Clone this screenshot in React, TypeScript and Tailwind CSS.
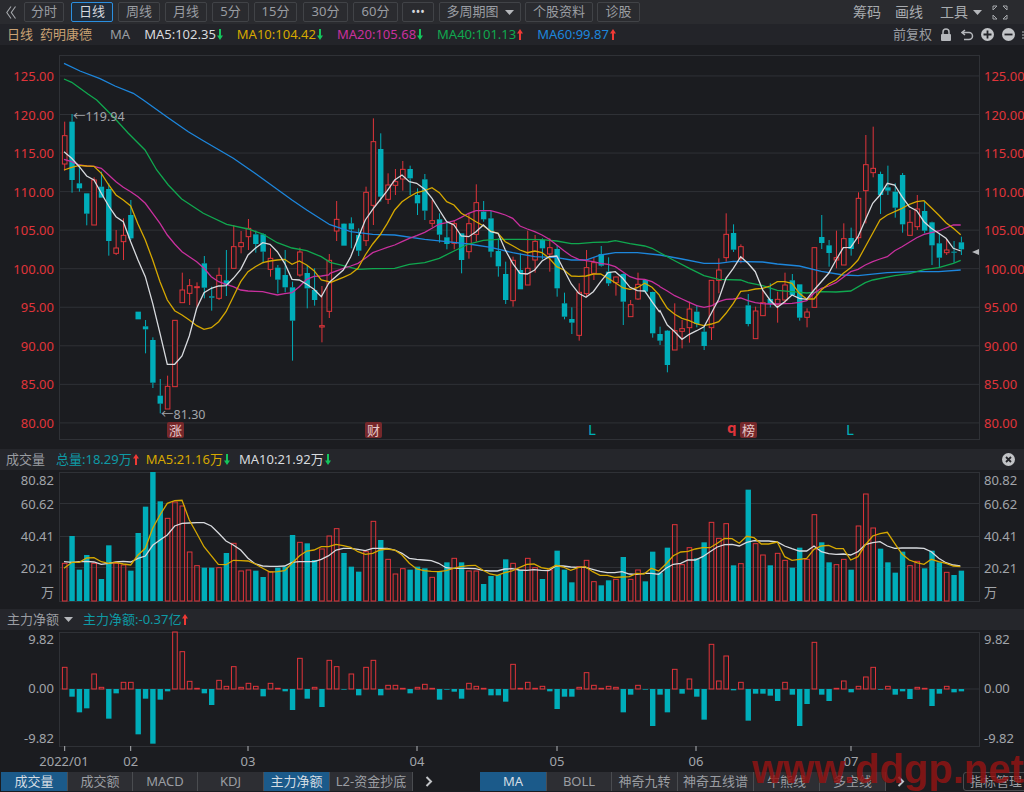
import React from 'react'

const RED = '#e0343a'
const CYAN = '#00adb9'
const WHITE = '#d8dade'
const YELLOW = '#d6a800'
const MAGENTA = '#c9309e'
const GREEN = '#10a84f'
const BLUE = '#1d86dc'
const GRID = '#2f3136'
const AXIS = '#a2a5aa'

const X = (i: number) => 64.7 + 7.35 * i

// high, body top, body bottom, low (zoomed y: screen y = 100 + v / 3), 1 = up candle
const candles: number[][] = [
  [65,107,192,212,1],[42,65,240,278,0],[195,250,265,275,0],[280,280,341,376,0],[232,240,375,375,1],[215,260,293,293,0],[250,267,423,467,0],[390,444,460,465,1],[355,406,425,480,1],[300,345,415,420,0],
  [635,635,658,658,0],[660,679,688,760,0],[712,720,848,864,0],[837,887,911,940,0],[827,859,927,927,1],[660,661,860,860,1],[518,570,608,608,1],[537,557,580,615,1],[547,560,562,620,1],[468,490,563,595,0],
  [560,589,593,632,0],[503,526,595,600,1],[450,541,555,588,0],[375,440,505,505,1],[393,428,440,460,1],[357,385,410,450,1],[392,403,432,458,0],[400,403,455,490,0],[445,475,508,530,1],[495,503,539,580,0],
  [450,525,562,577,0],[545,562,662,782,0],[443,456,525,530,1],[495,519,565,625,0],[505,570,600,617,0],[558,677,681,727,1],[462,481,634,654,1],[303,358,393,423,1],[370,371,437,437,0],[352,370,388,445,0],
  [385,405,452,468,0],[260,277,422,438,1],[55,125,316,375,1],[100,147,290,305,0],[220,255,298,312,1],[207,245,256,285,1],[183,208,237,272,1],[197,207,235,285,0],[265,285,310,345,0],[222,238,332,360,0],
  [300,362,370,382,1],[340,358,404,428,0],[365,412,432,448,0],[360,371,430,448,1],[400,400,480,520,0],[340,371,455,476,1],[253,308,403,425,1],[303,335,358,365,0],[333,355,455,472,0],[415,453,499,530,0],
  [485,522,600,612,0],[470,481,602,620,1],[460,510,568,568,0],[392,505,555,555,1],[405,424,480,518,1],[415,420,445,478,0],[415,443,462,515,1],[435,447,565,590,0],[578,610,650,658,0],[622,657,668,702,0],
  [550,577,706,722,1],[450,503,581,590,1],[472,488,520,540,1],[438,462,497,500,0],[472,515,550,558,0],[530,531,548,587,1],[520,522,605,675,0],[600,614,650,650,1],[518,553,597,600,1],[537,540,575,580,0],
  [575,576,700,713,0],[680,702,722,735,0],[690,692,795,817,0],[610,692,750,750,1],[660,686,694,745,1],[605,627,683,728,1],[615,635,672,682,0],[680,695,738,750,0],[540,541,683,720,1],[475,510,541,580,1],
  [340,403,473,485,1],[373,399,449,456,0],[433,440,475,490,1],[582,616,672,679,0],[620,633,716,716,1],[570,608,647,647,1],[550,597,612,622,0],[575,598,613,668,1],[518,555,600,610,1],[522,541,585,585,0],
  [553,553,653,662,0],[625,636,652,682,1],[442,443,622,622,1],[345,411,429,447,0],[420,436,459,500,0],[392,473,480,505,1],[370,416,495,495,1],[383,414,447,467,0],[277,295,413,432,1],[105,194,272,370,1],
  [80,205,218,232,1],[215,222,285,342,0],[197,262,272,285,0],[250,275,323,353,0],[219,225,373,398,0],[330,367,406,406,1],[285,327,380,390,1],[305,333,392,400,0],[365,367,436,495,0],[400,430,473,503,0],
  [417,450,458,465,1],[423,455,458,488,0],[410,427,448,465,0],
]

// bar tops (zoomed, screen y = 440 + v / 3), negative = red bar
const volume = [
  -370,288,389,345,-370,417,316,-370,-375,392,279,200,96,184,-235,-186,-198,-336,-377,383,383,-383,339,-310,-393,-390,392,411,-395,383,
  380,285,-307,310,360,-327,-288,-266,339,380,395,-335,-244,300,-358,-402,-386,389,380,385,-412,393,367,-355,367,-393,-393,432,408,405,
  358,-370,390,-355,-383,417,-390,332,389,427,-380,-361,-425,436,421,-418,351,-418,-390,424,335,398,323,-254,-374,-323,355,307,-247,-295,
  -251,376,-371,149,-311,-345,376,-340,-361,383,323,-358,-224,307,367,-374,-358,389,-258,-162,-264,326,367,398,335,-377,-364,385,332,367,
  -397,405,392,
]

// zoomed y of the bar's far end (screen y = 610 + v / 3); the zero line is 237
const netflow = [
  172,260,307,295,192,232,326,250,217,217,373,266,401,269,244,66,125,214,235,250,285,211,229,170,232,220,229,259,220,235,
  244,300,145,266,232,291,151,170,239,192,256,172,151,256,226,226,235,250,232,223,235,269,239,245,266,220,229,235,256,256,
  275,163,235,217,235,229,244,297,260,260,232,188,226,235,229,232,307,254,226,239,348,254,307,178,251,207,260,329,103,213,
  138,241,217,332,251,251,257,273,217,254,348,282,97,254,273,235,213,247,229,201,172,239,229,254,244,267,232,235,288,251,
  229,247,244,
]

const zoomed = (offX: number, offY: number, flat: number[]) => {
  const out: number[][] = []
  for (let i = 0; i < flat.length; i += 2) out.push([offX + flat[i] / 3, offY + flat[i + 1] / 3])
  return out
}

// the pieces come from overlapping crops, so points going backwards are dropped
const line = (...parts: number[][][]) => {
  let last = -1
  const pts: string[] = []
  parts.flat().forEach(([x, y]) => {
    if (x > last) {
      pts.push(`${x.toFixed(1)},${y.toFixed(1)}`)
      last = x
    }
  })
  return pts.join(' ')
}

const ma5 = line(
  zoomed(0, 100, [192,155,215,175,238,200,260,228,282,240,304,280,326,318,348,350,370,365,392,425,414,480,436,530,458,610,480,700,502,793,524,793,546,768,568,708,590,625,612,578,634,565,656,558,678,557,700,535,722,508,744,465,766,445,788,428,810,433,832,455,854,490,876,538,898,540,920,553,942,568,964,590,986,550]),
  zoomed(330, 100, [0,545,40,510,62,470,84,415,106,360,128,328,150,300,172,272,194,240,216,225,238,245,260,250,284,268,306,295,328,330,350,365,372,375,394,408,416,410,438,395,460,375,482,395,504,400,526,450,548,490,570,520,592,522,614,510,636,483,658,470,680,468,702,510,724,552,746,580,768,592,790,575,812,545,834,518,856,515,878,535,900,562,922,572,944,573,966,605,988,635]),
  zoomed(660, 100, [0,632,22,675,44,695,66,718,88,703,110,692,132,680,154,640,176,598,198,535,220,505,242,470,264,490,286,515,308,570,330,600,352,622,374,605,396,585,418,595,440,598,462,570,484,545,506,520,528,480,550,443,572,442,594,410,616,360,638,310,660,285,682,250,704,255,726,290,748,320,770,332,792,365,814,385,836,400,858,415,880,445,902,453]),
)
const ma10 = line(
  zoomed(0, 100, [192,210,215,202,238,196,260,198,282,199,304,220,326,255,348,285,370,300,392,318,414,372,436,420,458,480,480,545,502,600,524,632,546,645,568,660,590,677,612,688,634,683,656,665,678,635,700,590,722,545,744,515,766,500,788,488,810,483,832,480,854,478,876,493,898,483,920,495,942,512,964,540,986,545]),
  zoomed(330, 100, [0,548,40,532,62,522,84,505,106,465,128,432,150,405,172,370,194,330,216,305,238,290,260,278,284,272,306,263,328,278,350,305,372,315,394,340,416,352,438,365,460,377,482,393,504,400,526,425,548,437,570,450,592,458,614,453,636,458,658,475,680,500,702,510,724,528,746,529,768,528,790,522,812,522,834,535,856,548,878,563,900,568,922,563,944,550,966,562,988,585]),
  zoomed(660, 100, [0,590,22,625,44,643,66,655,88,662,110,672,132,677,154,672,176,665,198,640,220,610,242,574,264,572,286,567,308,565,330,558,352,545,374,545,396,550,418,580,440,597,462,597,484,570,506,552,528,540,550,520,572,503,594,480,616,440,638,400,660,360,682,345,704,335,726,325,748,313,770,305,792,302,814,323,836,345,858,368,880,385,902,404]),
)
const ma20 = line(
  zoomed(0, 100, [192,178,215,185,238,195,260,198,282,199,304,205,326,225,348,245,370,262,392,275,414,290,436,310,458,340,480,370,502,405,524,432,546,455,568,470,590,485,612,505,634,530,656,545,678,553,700,560,722,570,744,573,766,574,788,575,810,580,832,585,854,581,876,578,898,560,920,538,942,529,964,528,986,525]),
  zoomed(330, 100, [0,520,40,505,62,498,84,490,106,475,128,458,150,450,172,442,194,435,216,425,238,415,260,407,284,397,306,385,328,372,350,368,372,363,394,352,416,340,438,332,460,332,482,332,504,338,526,345,548,355,570,378,592,387,614,395,636,405,658,418,680,435,702,452,724,468,746,478,768,482,790,485,812,490,834,493,856,500,878,515,900,530,922,537,944,538,966,545,988,558]),
  zoomed(660, 100, [0,560,22,573,44,587,66,597,88,607,110,617,132,622,154,618,176,605,198,598,220,597,242,594,264,602,286,608,308,611,330,612,352,612,374,611,396,610,418,607,440,602,462,580,484,565,506,558,528,548,550,532,572,515,594,508,616,495,638,485,660,477,682,470,704,452,726,440,748,427,770,413,792,403,814,398,836,393,858,384,880,375,902,375]),
)
const ma40 = line(
  zoomed(0, 0, [192,237,215,247,240,265,265,283,290,300]),
  zoomed(0, 100, [340,50,385,100,435,150,470,210,505,255,545,297,610,340,680,373,744,387,788,402,832,428,876,444,920,452,964,470]),
  zoomed(330, 100, [0,487,40,497,84,508,128,506,194,505,238,493,284,488,328,475,372,453,416,432,460,421,504,418,570,418,636,419,680,423,724,431,746,431,790,427,834,426,856,422,900,431,944,438,966,445]),
  zoomed(660, 100, [0,458,44,482,88,505,132,527,176,538,242,540,264,548,308,557,352,571,396,575,440,579,484,575,528,576,572,573,616,548,638,540,704,527,748,521,792,509,836,503,880,490,902,481]),
)
const ma60 = line(
  zoomed(0, 0, [192,190,240,213,300,236,345,258,400,280]),
  zoomed(0, 100, [430,0,500,50,565,95,610,122,700,175,765,220,876,300,920,330,986,372]),
  zoomed(330, 100, [0,374,62,395,128,403,194,405,284,418,350,425,416,432,482,442,548,458,614,470,680,473,724,480,768,480,812,465,856,458,922,458]),
  zoomed(660, 100, [0,465,66,477,132,490,176,490,220,484,308,486,352,492,418,498,484,514,550,525,594,527,682,518,770,515,836,515,902,510]),
)
const volMa5 = line(
  zoomed(0, 440, [192,385,216,367,238,367,260,354,282,353,304,365,326,370,348,367,370,372,392,375,414,345,436,325,458,265,480,225,502,190,524,182,546,181,568,240,590,280,612,320,655,373,678,374,700,361,722,362,744,363,766,372,788,385,810,396,832,395,854,392,876,370,898,348,920,333,942,330,964,320,986,320,1008,313,1030,317,1052,322,1074,335,1096,343,1118,340,1140,330,1162,327,1184,330,1206,345,1228,370,1250,387,1272,392,1294,394,1316,395,1338,392,1360,385,1382,380,1404,377,1426,376,1448,390,1470,402,1492,406,1514,398]),
  zoomed(512, 440, [0,393,22,383,44,373,66,372,88,383,110,387,132,376,154,381,176,391,198,383,220,380,242,395,264,406,286,406,308,412,330,411,352,410,374,400,396,402,418,385,440,393,462,372,484,347,506,336,528,334,550,327,572,323,594,323,616,310,638,295,660,296,682,310,704,289,726,293,748,312,770,312,796,306,818,350,840,361,862,358,884,355,906,328,928,318,950,316,972,326,994,326,1016,360,1038,350,1060,315,1082,288,1104,281,1126,277,1148,310,1170,342,1192,360,1214,368,1236,373,1258,358,1280,365,1302,370,1324,378,1345,380]),
)
const volMa10 = line(
  zoomed(0, 440, [192,365,216,367,238,365,260,364,282,366,304,373,326,370,348,366,370,364,392,366,414,355,436,348,458,316,480,300,502,285,524,258,546,250,568,249,590,248,612,248,634,258,656,280,678,303,700,315,722,330,744,355,766,372,788,378,810,379,832,379,854,378,876,367,898,365,920,365,942,365,964,358,986,347,1008,330,1030,325,1052,325,1074,328,1096,332,1118,325,1140,325,1162,325,1184,330,1206,340,1228,355,1250,358,1272,360,1294,362,1316,370,1338,383,1360,385,1382,385,1404,385,1426,386,1448,391,1470,393,1492,393,1514,387]),
  zoomed(512, 440, [0,386,22,390,44,391,66,389,88,391,110,392,132,378,154,378,176,381,198,382,220,382,242,388,264,394,286,398,308,398,330,395,352,402,374,403,396,400,418,400,440,403,462,385,484,373,506,370,528,360,550,360,572,350,594,335,616,321,638,314,660,313,682,318,704,307,726,302,748,303,770,303,796,306,818,318,840,326,862,333,884,333,906,318,928,335,950,341,972,343,994,342,1016,345,1038,335,1060,314,1082,308,1104,305,1126,318,1148,325,1170,324,1192,324,1214,324,1236,325,1258,335,1280,355,1302,368,1324,375,1345,378]),
)

const toolbarButtons = [
  { label: '分时', cls: 'w-[40px] ml-[8px] border-[#414347]' },
  { label: '日线', cls: 'w-[42px] ml-[7px] border-[#2b8fe0] text-[#d5d8dc] bg-[#1f2c3a]' },
  { label: '周线', cls: 'w-[42px] ml-[5px] border-[#414347]' },
  { label: '月线', cls: 'w-[42px] ml-[5px] border-[#414347]' },
  { label: '5分', cls: 'w-[37px] ml-[5px] border-[#414347]' },
  { label: '15分', cls: 'w-[43px] ml-[5px] border-[#414347]' },
  { label: '30分', cls: 'w-[45px] ml-[6px] border-[#414347]' },
  { label: '60分', cls: 'w-[45px] ml-[5px] border-[#414347]' },
  { label: '•••', cls: 'w-[32px] ml-[4px] text-[12px] text-[#d5d8dc] border-[#414347]' },
]

const activeTab = 'bg-[#1b5a8a] text-[#d5dde4]'
const plainTab = 'bg-[#2d2e33]'

const leftTabs = [
  { label: '成交量', cls: `w-[67px] ${activeTab}` },
  { label: '成交额', cls: `w-[65px] ${plainTab}` },
  { label: 'MACD', cls: `w-[65px] ${plainTab}` },
  { label: 'KDJ', cls: `w-[66px] ${plainTab}` },
  { label: '主力净额', cls: `w-[66px] ${activeTab}` },
  { label: 'L2-资金抄底', cls: `w-[83px] ${plainTab}` },
]
const rightTabs = [
  { label: 'MA', cls: `w-[67px] ${activeTab}` },
  { label: 'BOLL', cls: `w-[65px] ${plainTab}` },
  { label: '神奇九转', cls: `w-[66px] ${plainTab}` },
  { label: '神奇五线谱', cls: `w-[76px] ${plainTab}` },
  { label: '牛熊线', cls: `w-[66px] ${plainTab}` },
  { label: '多空线', cls: `w-[66px] ${plainTab}` },
]

function Arrow({ up }: { up: boolean }) {
  return (
    <svg width="6" height="12" viewBox="0 0 6 12" className="ml-[1px]">
      {up ? (
        <path d="M3 0 L6 4.5 H4 V11 H2 V4.5 H0 Z" fill="#f03a35" />
      ) : (
        <path d="M3 11 L6 6.5 H4 V0 H2 V6.5 H0 Z" fill="#14c45c" />
      )}
    </svg>
  )
}

function Caret() {
  return (
    <svg width="9" height="5" viewBox="0 0 9 5">
      <path d="M0 0 H9 L4.5 5 Z" fill="#b5b7bb" />
    </svg>
  )
}

function Candles() {
  return (
    <>
      {candles.map(([h, t, b, l, up], i) => {
        const x = X(i)
        const color = up ? RED : CYAN
        const top = 100 + t / 3
        const bot = 100 + b / 3
        return (
          <g key={i}>
            <line x1={x} x2={x} y1={100 + h / 3} y2={top} stroke={color} strokeWidth="1" />
            <line x1={x} x2={x} y1={bot} y2={100 + l / 3} stroke={color} strokeWidth="1" />
            {up ? (
              <rect x={x - 2.3} y={top} width={4.6} height={Math.max(bot - top, 1)} fill="#1b1c20" stroke={RED} strokeWidth="1" />
            ) : (
              <rect x={x - 2.7} y={top} width={5.4} height={Math.max(bot - top, 1)} fill={CYAN} />
            )}
          </g>
        )
      })}
    </>
  )
}

function Badge({ x, label }: { x: number; label: string }) {
  return (
    <g>
      <rect x={x} y={422} width={17} height={16} rx={2} fill="#76282b" />
      <text x={x + 8.5} y={435} textAnchor="middle" fontSize="13" fill="#e6c9c9">{label}</text>
    </g>
  )
}

function PricePanel() {
  const levels = [125, 120, 115, 110, 105, 100, 95, 90, 85, 80]
  const yOf = (p: number) => 114.5 + (120 - p) * 7.71
  return (
    <svg width="1024" height="404" viewBox="0 45 1024 404" className="block shrink-0">
      <rect x="59.5" y="55.5" width="920" height="384" fill="none" stroke={GRID} />
      {levels.map((p) => (
        <g key={p}>
          <line x1="59" x2="979" y1={yOf(p)} y2={yOf(p)} stroke={GRID} />
          <text x="54" y={yOf(p) + 5} textAnchor="end" fontSize="13" fill={RED}>{p.toFixed(2)}</text>
          <text x="984" y={yOf(p) + 5} fontSize="13" fill={RED}>{p.toFixed(2)}</text>
        </g>
      ))}
      <Candles />
      <polyline points={ma60} fill="none" stroke={BLUE} strokeWidth="1.3" />
      <polyline points={ma40} fill="none" stroke={GREEN} strokeWidth="1.3" />
      <polyline points={ma20} fill="none" stroke={MAGENTA} strokeWidth="1.3" />
      <polyline points={ma10} fill="none" stroke={YELLOW} strokeWidth="1.3" />
      <polyline points={ma5} fill="none" stroke={WHITE} strokeWidth="1.3" />
      <text x="73" y="121" fontSize="12.5" fill={AXIS}>←119.94</text>
      <text x="161" y="419" fontSize="12.5" fill={AXIS}>←81.30</text>
      <Badge x={167} label="涨" />
      <Badge x={365} label="财" />
      <Badge x={740} label="榜" />
      <text x="588" y="435" fontSize="15" fill={CYAN}>L</text>
      <text x="846" y="435" fontSize="15" fill={CYAN}>L</text>
      <text x="727" y="433" fontSize="15" fontWeight="700" fill={RED}>q</text>
      <polygon points="972,252 979,249 979,255" fill="#b8babd" />
    </svg>
  )
}

function VolumePanel() {
  const labels: [string, number][] = [['80.82', 485], ['60.62', 509], ['40.41', 541], ['20.21', 573], ['万', 597]]
  return (
    <svg width="1024" height="139" viewBox="0 470 1024 139" className="block shrink-0">
      <rect x="59.5" y="472.5" width="920" height="129" fill="none" stroke={GRID} />
      {[503.5, 536.5, 567.5].map((y) => (
        <line key={y} x1="59" x2="979" y1={y} y2={y} stroke={GRID} />
      ))}
      {labels.map(([t, y]) => (
        <g key={t}>
          <text x="54" y={y} textAnchor="end" fontSize="13" fill={AXIS}>{t}</text>
          <text x="984" y={y} fontSize="13" fill={AXIS}>{t}</text>
        </g>
      ))}
      {volume.map((v, i) => {
        const top = 440 + Math.abs(v) / 3
        return v < 0 ? (
          <rect key={i} x={X(i) - 2.3} y={top} width={4.6} height={601 - top} fill="none" stroke={RED} />
        ) : (
          <rect key={i} x={X(i) - 2.7} y={Math.max(top, 472)} width={5.4} height={601 - Math.max(top, 472)} fill={CYAN} />
        )
      })}
      <polyline points={volMa10} fill="none" stroke={WHITE} strokeWidth="1.3" />
      <polyline points={volMa5} fill="none" stroke={YELLOW} strokeWidth="1.3" />
    </svg>
  )
}

function NetflowPanel() {
  const ticks: [number, string][] = [[64.7, '2022/01'], [130.7, '02'], [248, '03'], [417, '04'], [557, '05'], [696, '06'], [851, '07']]
  const labels: [string, number][] = [['9.82', 644], ['0.00', 693], ['-9.82', 743]]
  return (
    <svg width="1024" height="141" viewBox="0 630 1024 141" className="block shrink-0">
      <rect x="59.5" y="632.5" width="920" height="114" fill="none" stroke={GRID} />
      <line x1="59" x2="979" y1="689" y2="689" stroke={GRID} />
      {labels.map(([t, y]) => (
        <g key={t}>
          <text x="54" y={y} textAnchor="end" fontSize="13" fill={AXIS}>{t}</text>
          <text x="984" y={y} fontSize="13" fill={AXIS}>{t}</text>
        </g>
      ))}
      {netflow.map((v, i) => {
        const y = 610 + v / 3
        if (v < 237) return <rect key={i} x={X(i) - 2.3} y={y} width={4.6} height={Math.max(689 - y, 0.5)} fill="none" stroke={RED} />
        return <rect key={i} x={X(i) - 2.7} y={689} width={5.4} height={y - 689} fill={CYAN} />
      })}
      {ticks.map(([x, t]) => (
        <g key={t}>
          <line x1={x} x2={x} y1="746" y2="751" stroke="#b0b2b6" />
          <text x={x === 64.7 ? 64 : x} y="766" textAnchor="middle" fontSize="13" fill={AXIS}>{t}</text>
        </g>
      ))}
    </svg>
  )
}

export default function App() {
  return (
    <div className="relative w-[1024px] h-[792px] overflow-hidden flex flex-col bg-[#1b1c20] font-['Noto_Sans','Noto_Sans_CJK_SC',sans-serif] text-[13px] text-[#9a9da2]">
      {/* period buttons */}
      <div className="h-6 shrink-0 flex items-center bg-[#2a2b2f] pl-[6px] pr-2">
        <svg width="10" height="13" viewBox="0 0 10 13">
          <path d="M5 0.5 L0.8 6.5 L5 12.5 M9.5 0.5 L5.3 6.5 L9.5 12.5" fill="none" stroke="#a5a8ac" strokeWidth="1.1" />
        </svg>
        {toolbarButtons.map((b) => (
          <div key={b.label} className={`h-5 flex items-center justify-center border rounded-[2px] ${b.cls}`}>
            {b.label}
          </div>
        ))}
        <div className="w-[82px] ml-[5px] h-5 flex items-center justify-center gap-[6px] border border-[#414347] rounded-[2px]">
          多周期图
          <Caret />
        </div>
        <div className="w-[68px] ml-[4px] h-5 flex items-center justify-center border border-[#414347] rounded-[2px]">个股资料</div>
        <div className="w-[43px] ml-[4px] h-5 flex items-center justify-center border border-[#414347] rounded-[2px]">诊股</div>
        <div className="ml-[213px] flex items-center text-[#a8abaf] text-sm">
          <span>筹码</span>
          <span className="ml-[14px]">画线</span>
          <span className="ml-[17px]">工具</span>
          <span className="ml-[5px]"><Caret /></span>
          <svg width="16" height="15" viewBox="0 0 16 15" className="ml-[10px]">
            <path d="M1 5 V1 H5 L1 5 M15 5 V1 H11 L15 5 M1 10 V14 H5 L1 10 M15 10 V14 H11 L15 10" fill="none" stroke="#a5a8ac" strokeWidth="1" />
          </svg>
        </div>
      </div>

      {/* MA legend */}
      <div className="h-[21px] shrink-0 flex items-center whitespace-nowrap bg-[#232429] pl-[7px] [&>*]:shrink-0">
        <span className="text-[#c9a274]">日线</span>
        <span className="ml-[7px] text-[#c9a274]">药明康德</span>
        <span className="ml-[18px]">MA</span>
        <span className="ml-[14px] text-[#d8dade]">MA5:102.35</span><Arrow up={false} />
        <span className="ml-[14px] text-[#d6a800]">MA10:104.42</span><Arrow up={false} />
        <span className="ml-[14px] text-[#c9309e]">MA20:105.68</span><Arrow up={false} />
        <span className="ml-[14px] text-[#10a84f]">MA40:101.13</span><Arrow up />
        <span className="ml-[14px] text-[#1d86dc]">MA60:99.87</span><Arrow up />
        <span className="ml-[277px]">前复权</span>
        <svg width="12" height="13" viewBox="0 0 12 13" className="ml-[8px]">
          <path d="M3 6 V4 a3 3 0 0 1 6 0 V6" fill="none" stroke="#b5b7bb" strokeWidth="1.5" />
          <rect x="1" y="6" width="10" height="7" rx="1" fill="#b5b7bb" />
        </svg>
        <svg width="13" height="12" viewBox="0 0 13 12" className="ml-[9px]">
          <path d="M4 1 L1 3.5 L4 6 M1.5 3.5 H8 a3.5 3.5 0 0 1 0 7 H3" fill="none" stroke="#b5b7bb" strokeWidth="1.5" />
        </svg>
        <svg width="13" height="13" viewBox="0 0 13 13" className="ml-[7px]">
          <circle cx="6.5" cy="6.5" r="6.5" fill="#c2c4c7" />
          <path d="M6.5 2.5 V10.5 M2.5 6.5 H10.5" stroke="#232429" strokeWidth="1.8" />
        </svg>
        <svg width="13" height="13" viewBox="0 0 13 13" className="ml-[8px]">
          <circle cx="6.5" cy="6.5" r="6.5" fill="#c2c4c7" />
          <path d="M2.5 6.5 H10.5" stroke="#232429" strokeWidth="1.8" />
        </svg>
        <svg width="3" height="8" viewBox="0 0 3 8" className="ml-[7px]">
          <path d="M0 1 H3 M0 4 H3 M0 7 H3" stroke="#b5b7bb" strokeWidth="1" />
        </svg>
      </div>

      <PricePanel />

      {/* volume legend */}
      <div className="h-[21px] shrink-0 flex items-center whitespace-nowrap bg-[#25262b] pl-[6px]">
        <span>成交量</span>
        <span className="ml-[11px] text-[#0e9aa5]">总量:18.29万</span><Arrow up />
        <span className="ml-[7px] text-[#d6a800]">MA5:21.16万</span><Arrow up={false} />
        <span className="ml-[9px] text-[#d8dade]">MA10:21.92万</span><Arrow up={false} />
        <svg width="13" height="13" viewBox="0 0 13 13" className="ml-[671px]">
          <circle cx="6.5" cy="6.5" r="6.5" fill="#c2c4c7" />
          <path d="M4 4 L9 9 M9 4 L4 9" stroke="#25262b" strokeWidth="1.8" />
        </svg>
      </div>

      <VolumePanel />

      {/* net flow legend */}
      <div className="h-[21px] shrink-0 flex items-center bg-[#25262b] pl-[7px]">
        <span>主力净额</span>
        <span className="ml-[5px]"><Caret /></span>
        <span className="ml-[10px] text-[#0e9aa5]">主力净额:-0.37亿</span><Arrow up />
      </div>

      <NetflowPanel />

      {/* indicator tabs */}
      <div className="h-[21px] shrink-0 flex items-center whitespace-nowrap pl-[1px] [&>*]:shrink-0">
        {leftTabs.map((t) => (
          <div key={t.label} className={`h-[19px] flex items-center justify-center border-r border-[#4a4c50] ${t.cls}`}>
            {t.label}
          </div>
        ))}
        <svg width="8" height="11" viewBox="0 0 8 11" className="ml-[12px]">
          <path d="M1.5 1 L6 5.5 L1.5 10" fill="none" stroke="#c2c4c7" strokeWidth="2" />
        </svg>
        <div className="ml-[47px] flex [&>*]:shrink-0">
          {rightTabs.map((t) => (
            <div key={t.label} className={`h-[19px] flex items-center justify-center border-r border-[#4a4c50] ${t.cls}`}>
              {t.label}
            </div>
          ))}
        </div>
        <svg width="8" height="11" viewBox="0 0 8 11" className="ml-[11px]">
          <path d="M1.5 1 L6 5.5 L1.5 10" fill="none" stroke="#c2c4c7" strokeWidth="2" />
        </svg>
        <div className="ml-[58px] w-[66px] h-[19px] flex items-center justify-center border border-[#4a4c50] rounded-[3px]">指标管理</div>
      </div>

      {/* watermark */}
      <div className="absolute left-[752px] top-[746px] whitespace-nowrap font-['Liberation_Sans',sans-serif] font-bold text-[40px] leading-[46px] text-[#901414]/85">
        www.ddgp.net
      </div>
    </div>
  )
}
